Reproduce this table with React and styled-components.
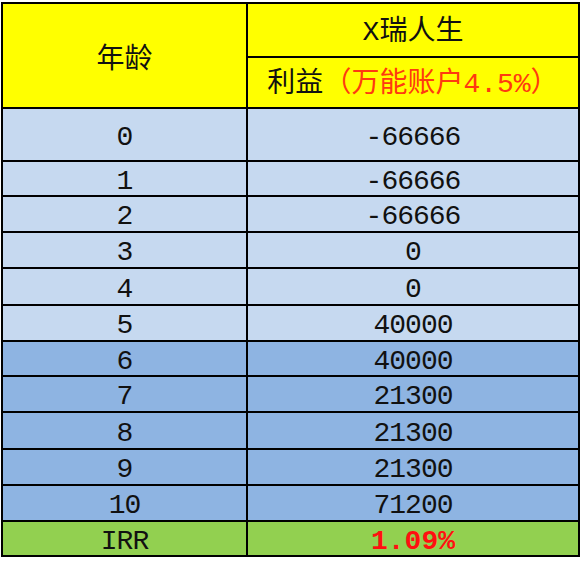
import React from "react";
import styled, { createGlobalStyle } from "styled-components";

const Global = createGlobalStyle`
  html, body { margin: 0; padding: 0; background: #ffffff; }
  body { font-family: "Liberation Mono", "Noto Sans CJK SC", monospace; }
`;

const Page = styled.div`
  padding: 2px 0 0 1px;
`;

const Table = styled.div`
  display: grid;
  grid-template-columns: 243px 330px;
  grid-template-rows: 52px 49px 51px 33px 34px 34px 35px 34px 33px 34px 35px 34px 34px 33px;
  gap: 2px;
  padding: 2px;
  width: max-content;
  background: #000000;
`;

const bgs = {
  yellow: "#ffff00",
  light: "#c6d9f0",
  dark: "#8eb4e2",
  green: "#92d050",
};

const Cell = styled.div`
  background: ${(p) => bgs[p.$tone]};
  display: flex;
  align-items: center;
  justify-content: center;
  padding-top: ${(p) => (p.$low ? 5 : 0)}px;
  box-sizing: border-box;
  font-family: "Liberation Mono", "Noto Sans CJK SC", monospace;
  font-size: 28px;
  letter-spacing: -1px;
  color: #111111;
  ${(p) => (p.$span ? `grid-row: span ${p.$span};` : "")}
`;

const HeadText = styled.span`
  font-family: "Noto Sans CJK SC", sans-serif;
  font-size: 28px;
  letter-spacing: 0;
  color: #111111;
  line-height: 1;
`;

const Latin = styled.span`
  font-family: "Liberation Mono", monospace;
  font-size: 28px;
`;

const Red = styled.span`
  color: #ff3a10;
`;

const Irr = styled.span`
  font-family: "Liberation Mono", monospace;
  font-weight: bold;
  font-size: 28px;
  letter-spacing: 0;
  color: #ff1010;
`;

const rows = [
  ["0", "-66666", "light"],
  ["1", "-66666", "light"],
  ["2", "-66666", "light"],
  ["3", "0", "light"],
  ["4", "0", "light"],
  ["5", "40000", "light"],
  ["6", "40000", "dark"],
  ["7", "21300", "dark"],
  ["8", "21300", "dark"],
  ["9", "21300", "dark"],
  ["10", "71200", "dark"],
];

export default function App() {
  return (
    <Page>
      <Global />
      <Table>
        <Cell $tone="yellow" $span={2}>
          <HeadText>年龄</HeadText>
        </Cell>
        <Cell $tone="yellow">
          <HeadText>
            <Latin>X</Latin>瑞人生
          </HeadText>
        </Cell>
        <Cell $tone="yellow">
          <HeadText>
            利益<Red>（万能账户<Latin>4.5%</Latin>）</Red>
          </HeadText>
        </Cell>
        {rows.map(([age, val, tone]) => (
          <React.Fragment key={age}>
            <Cell $tone={tone} $low>{age}</Cell>
            <Cell $tone={tone} $low>{val}</Cell>
          </React.Fragment>
        ))}
        <Cell $tone="green" $low>IRR</Cell>
        <Cell $tone="green" $low>
          <Irr>1.09%</Irr>
        </Cell>
      </Table>
    </Page>
  );
}
